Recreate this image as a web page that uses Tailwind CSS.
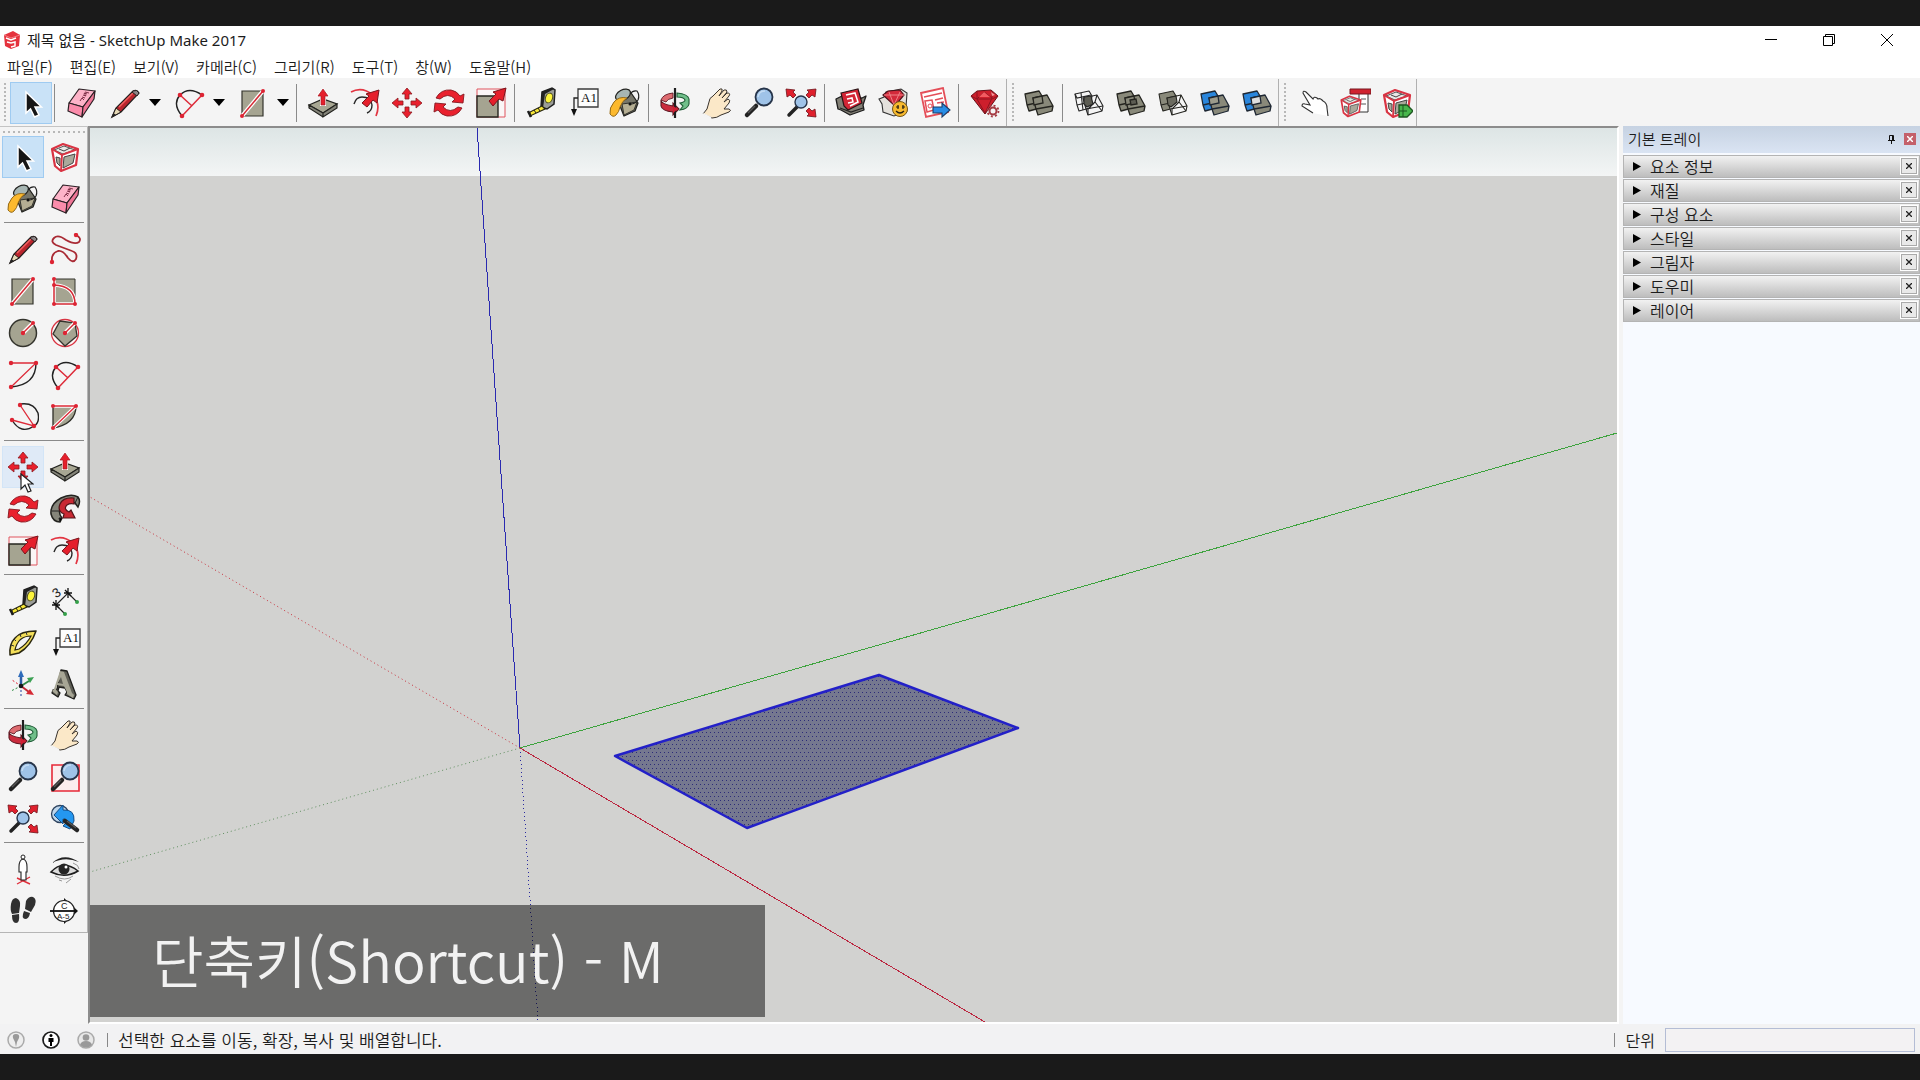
<!DOCTYPE html>
<html lang="ko">
<head>
<meta charset="utf-8">
<title>제목 없음 - SketchUp Make 2017</title>
<script src="https://cdn.jsdelivr.net/npm/@tailwindcss/browser@4"></script>
</head>
<body class="flex h-screen flex-col overflow-hidden bg-[#1a1a1a] py-[26px] font-['Noto_Sans_CJK_KR',sans-serif] font-[350] text-[#1c1c1c]">

<svg class="hidden" aria-hidden="true">
  <symbol id="select" viewBox="0 0 32 32"><path d="M11 5v21l4.500-4 4 8 4.500-2-4-8h6.500z" fill="#161616" stroke="#fff" stroke-width="1.500"/></symbol>
  <symbol id="eraser" viewBox="0 0 32 32"><g stroke="#2b2024" stroke-width="1.200" stroke-linejoin="round"><path d="M14 2l16 2-12 16-14-4z" fill="#fdb3c8"/><path d="M4 16l14 4-1 10-14-6z" fill="#fb8cab"/><path d="M30 4l-1 8-12 18 1-10z" fill="#f07797"/></g><path d="M15 14l2-3 2 2M17 10l3 1M18 8l3 1-2-3 3 1M20 5l4 1" fill="none" stroke="#7e3048" stroke-width="1"/></symbol>
  <symbol id="pencil" viewBox="0 0 32 32"><path d="M3 30l4-9L24 4q4-2 6 2L12 25z" fill="#b9252d" stroke="#26201f" stroke-width="1.300"/><path d="M3 30l4-9 5 4z" fill="#e6d9b6" stroke="#26201f"/><path d="M3 30l1.500-4 2.500 2z" fill="#222"/><path d="M10 20L24 6" stroke="#f3605f" stroke-width="1.500"/><path d="M23 5l5 4 2-3q-2-4-6-2z" fill="#8d8587" stroke="#26201f"/></symbol>
  <symbol id="arc2" viewBox="0 0 32 32"><path d="M9 29Q-1 17 7 8 16-1 29 8" fill="none" stroke="#222" stroke-width="1.400"/><path d="M9 29L29 8M7 8l12 11" fill="none" stroke="#dd2b39" stroke-width="1.500"/><g fill="#dd2433"><circle cx="7" cy="8" r="2.300"/><circle cx="29" cy="8" r="2.300"/><circle cx="9" cy="29" r="2.300"/></g></symbol>
  <symbol id="rect" viewBox="0 0 32 32"><path d="M5 4h21v25H5z" fill="#a5a491" stroke="#34342d" stroke-width="1.200"/><path d="M5 29L26 4" stroke="#fff" stroke-width="4"/><path d="M5 29L26 4" stroke="#d52a35" stroke-width="1.500"/><g fill="#dd2433"><circle cx="5" cy="29" r="2"/><circle cx="26" cy="4" r="2"/></g></symbol>
  <symbol id="pushpull" viewBox="0 0 32 32"><path d="M2 18l14-6 14 5-14 9z" fill="#a8a793" stroke="#22221e" stroke-width="1.200"/><path d="M2 18v3l14 9v-4zM30 17v4l-14 9v-4z" fill="#85857a" stroke="#22221e" stroke-width="1.200"/><path d="M16 1l7 8h-4v10h-6V9H9z" fill="#fff"/><path d="M16 2l5 7h-3v9h-4V9h-3z" fill="#e51f2b" stroke="#a51a23" stroke-width=".7"/></symbol>
  <symbol id="offset" viewBox="0 0 32 32"><path d="M2 5Q13-1 24 8q8 9 3 21" fill="none" stroke="#e23542" stroke-width="1.700"/><path d="M5 17q2-7 8-7 9 0 10 8 0 6-5 8" fill="none" stroke="#272727" stroke-width="1.400"/><path d="M13 16l7-7-3-2L30 3l-2 13-4-3-6 7z" fill="#e51f2b" stroke="#79151c" stroke-width="1"/></symbol>
  <symbol id="move" viewBox="0 0 32 32"><g fill="#e9202d" stroke="#8b1a20" stroke-width=".8"><path d="M16 1l5 6h-3v5h-4V7h-3z"/><path d="M31 16l-6 5v-3h-5v-4h5v-3z"/><path d="M16 31l-5-6h3v-5h4v5h3z"/><path d="M1 16l6-5v3h5v4H7v3z"/></g></symbol>
  <symbol id="rotate" viewBox="0 0 32 32"><g fill="#e9202d" stroke="#841920" stroke-width=".9"><path d="M3 11Q8 2 18 3q6 1 9 6l4-2-1 9-11-1 3-3q-7-7-15 0z"/><path d="M29 21q-5 9-15 8-6-1-9-6l-4 2 1-9 11 1-3 3q7 7 15 0z"/></g></symbol>
  <symbol id="scale" viewBox="0 0 32 32"><path d="M2 2h28v28H2z" fill="#faf6f6" stroke="#e0555e"/><path d="M2 9h21v21H2z" fill="#a5a491" stroke="#26261f" stroke-width="1.400"/><path d="M14 14l7-7-3-2L31 1l-3 13-4-2-6 7z" fill="#e51f2b" stroke="#79151c"/></symbol>
  <symbol id="tape" viewBox="0 0 32 32"><path d="M17 5l10-4 3 2-1 14-7 5-6-2z" fill="#9a9c97" stroke="#202020" stroke-width="1.500"/><path d="M17 5l10-4 2 1-9 5-2 14-2-1z" fill="#222"/><ellipse cx="24" cy="11" rx="3.500" ry="5" fill="#fdf43c" stroke="#4b4a1c" transform="rotate(20 24 11)"/><path d="M17 19L5 25v4l15-7z" fill="#f7e736" stroke="#26240d" stroke-width="1.100"/><path d="M3 24l3 6" stroke="#1c1c1c" stroke-width="2.500"/><path d="M9 23l2 3M13 21l2 3" stroke="#1c1c1c"/></symbol>
  <symbol id="label" viewBox="0 0 32 32"><path d="M11 2h20v18H11z" fill="#fdfdfd" stroke="#3b3b3b" stroke-width="1.300"/><path d="M11 11H7v13" fill="none" stroke="#222" stroke-width="1.300"/><path d="M4 22h6l-3 7z" fill="#111"/><text x="14" y="15" font-family="Liberation Serif" font-size="13" fill="#111">A1</text></symbol>
  <symbol id="bucket" viewBox="0 0 32 32"><path d="M7 9L20 3l9 13-3 8-11 5z" fill="#77766a" stroke="#22221f" stroke-width="1.300" stroke-linejoin="round"/><path d="M13 17l15-2-3 8-10 5z" fill="#b5ae93" stroke="#33332d"/><ellipse cx="14" cy="8" rx="8" ry="5" fill="#a7b6b3" stroke="#22221f" stroke-width="1.200" transform="rotate(-28 14 8)"/><path d="M21 7q3-4 7-3 3 4 1 9-3 4-7 4" fill="none" stroke="#222" stroke-width="1.200"/><path d="M18 11q-8-2-13 4-5 6-4 12 3 4 6 1 3-3 4-8 2-6 7-9z" fill="#fcb92e" stroke="#93691a"/><circle cx="21" cy="17" r="1.500" fill="#111"/></symbol>
  <symbol id="orbit" viewBox="0 0 32 32"><path d="M18 6q11 1 12 6v5q-1 5-9 6l3-4-3-3q5-1 5-3-1-3-8-3z" fill="#70bf8a" stroke="#1f5c36" stroke-width="1.100"/><path d="M2 13q0 4 12 6v-3l6 6-6 6v-3Q3 24 2 19z" fill="#ca2b3d" stroke="#5c1620" stroke-width="1.100"/><path d="M2 13q2-6 12-7v5q-6 1-7 4z" fill="#dd6b70" stroke="#5c1620" stroke-width=".9"/><path d="M16 1v30" stroke="#1e1e1e" stroke-width="2.200"/><path d="M14 19l5 3-5 4z" fill="#d01f33"/></symbol>
  <symbol id="hand" viewBox="0 0 32 32"><path d="M2 27q5-4 6-12 0-4 4-6l7-7q3-1 2 2l-3 5 5-6q3-1 3 2l-5 6 5-5q4 0 2 3l-5 6 4-3q3 1 1 4l-5 6 5 0q3 1 0 3l-8 3q-4 3-9 3z" fill="#fbe8c8" stroke="#39332d" stroke-width="1"/><path d="M2 27l8 4" stroke="#f4f4f4" stroke-width="2"/></symbol>
  <symbol id="zoom" viewBox="0 0 32 32"><path d="M4 28l9-9" stroke="#222" stroke-width="4.500" stroke-linecap="round"/><path d="M5 26l7-7" stroke="#555" stroke-width="1.500"/><circle cx="21" cy="10" r="8.500" fill="#9fc3e8" stroke="#27354a" stroke-width="1.800"/><path d="M15 10q1-6 7-6" stroke="#c4dcf3" stroke-width="1.500" fill="none"/></symbol>
  <symbol id="zoomwin" viewBox="0 0 32 32"><path d="M3 4h27v26H3z" fill="#fbeeee" stroke="#e62937" stroke-width="1.600"/><use href="#zoom"/></symbol>
  <symbol id="extents" viewBox="0 0 32 32"><path d="M4 28l8-8" stroke="#222" stroke-width="3.500" stroke-linecap="round"/><circle cx="16" cy="15" r="6" fill="#9fc3e8" stroke="#27354a" stroke-width="1.400"/><g fill="#df202d" stroke="#6f141b" stroke-width=".8"><path d="M1 2l9 1-2 2 3 3-3 3-3-3-3 2z"/><path d="M31 2l-9 1 2 2-3 3 3 3 3-3 3 2z"/><path d="M31 30l-9-1 2-2-3-3 3-3 3 3 3-2z"/></g></symbol>
  <symbol id="prev" viewBox="0 0 32 32"><circle cx="11" cy="11" r="8.500" fill="#bcd5eb" stroke="#2d425d" stroke-width="1.300"/><path d="M5 12l9-10v5q12-1 11 11l-4 8-7-3q7-6 0-7v5z" fill="#2497f0" stroke="#174e86"/><path d="M16 18l12 9" stroke="#252525" stroke-width="4.500" stroke-linecap="round"/><path d="M18 18l9 7" stroke="#5a5a5a" stroke-width="1.200"/></symbol>
  <symbol id="warehouse" viewBox="0 0 32 32"><path d="M1 12l6-3 3 5 17-3 4-2-3 9 1 5-14 5-9-5-3-1z" fill="#827f75" stroke="#1d1d1d" stroke-width="1.300" stroke-linejoin="round"/><path d="M6 6l17-4 4 14-14 7-4-4z" fill="#d42535" stroke="#2b1416" stroke-width="1.200"/><path d="M11 8l9-2 2 6 1 3-8 4M12 12l5-1 1 4-5 1" fill="none" stroke="#fff" stroke-width="1.500"/><path d="M5 21l11 4 12-4" fill="none" stroke="#222" stroke-width="1.300"/></symbol>
  <symbol id="extwh" viewBox="0 0 32 32"><path d="M2 12l5-2 2-5 15-3 6 4-1 14 1 4-13 5-11-4-1-8z" fill="#e4e1dc" stroke="#333" stroke-width="1.100"/><path d="M6 8l5-4 12-1 4 5-9 11z" fill="#d32a3b" stroke="#4f131b" stroke-width="1.200"/><path d="M7 8l20 0M12 5l5 13 6-13" stroke="#ef8187" stroke-width="1" fill="none"/><circle cx="23" cy="22" r="7.500" fill="#f8ba2e" stroke="#725517"/><path d="M19 20h3M25 20h3M19 24q4 4 8 0M21 18v4M26 18v4" fill="none" stroke="#282012" stroke-width="1.200"/></symbol>
  <symbol id="layout" viewBox="0 0 32 32"><path d="M2 6l22-5 5 24-22 5z" fill="#fff" stroke="#e44e58" stroke-width="1.800"/><path d="M5 10l18-4M16 13l8-2M18 16l7-1" fill="none" stroke="#e44e58" stroke-width="1.600"/><path d="M6 14l7-1 2 10-7 2z" fill="none" stroke="#e44e58" stroke-width="1.500"/><circle cx="11" cy="19" r="2" fill="none" stroke="#e44e58"/><path d="M14 20h9v-4l8 7-8 7v-4h-9z" fill="#298de5" stroke="#1c3c65" stroke-width="1.100"/></symbol>
  <symbol id="ruby" viewBox="0 0 32 32"><path d="M2 9l6-5 14-1 7 6-13 18z" fill="#cd1f2c" stroke="#651018" stroke-width="1"/><path d="M8 4l0 8 7-7 8 6 0-7M2 9l6 3h15l6-3M8 12l8 14 7-15" fill="none" stroke="#8f1520"/><path d="M10 10l5-5 6 5z" fill="#f25b61"/><path d="M22 5l4 3-3 1z" fill="#f6989b"/><circle cx="24" cy="24" r="3.500" fill="#f4f4f4" stroke="#a53b43" stroke-width="2"/><circle cx="24" cy="24" r="5.500" fill="none" stroke="#a53b43" stroke-width="1.800" stroke-dasharray="2 2.300"/></symbol>
  <symbol id="solidA" viewBox="0 0 32 32"><path d="M2 7l14-3 3 5-2 12-11 3-2-6z" stroke-linejoin="round"/><path d="M4 18l9-2" fill="none"/></symbol>
  <symbol id="solidB" viewBox="0 0 32 32"><path d="M10 11l14-3 6 11-1 5-14 4-2-6z" stroke-linejoin="round"/><path d="M13 22l17-3" fill="none"/></symbol>
  <symbol id="shell" viewBox="0 0 32 32"><g fill="#89897a" stroke="#24241f" stroke-width="1.300"><use href="#solidA"/><use href="#solidB"/><path d="M10 11l9-2 1 7-9 2z"/></g></symbol>
  <symbol id="intersect" viewBox="0 0 32 32"><g fill="none" stroke="#252525" stroke-width="1.100"><use href="#solidA"/><use href="#solidB"/><path d="M2 7l2 4 14-3M8 6l2 17M24 8l-2 7 7 9M15 28l0-6 7-7"/><path d="M11 10l7-1 2 8-6 3-3-3z" fill="#5c5c53"/></g></symbol>
  <symbol id="union" viewBox="0 0 32 32"><g fill="#89897a" stroke="#24241f" stroke-width="1.300"><use href="#solidA"/><use href="#solidB"/><path d="M10 11l9-2 1 7-9 2z"/><path d="M15 13l6-1 1 5-6 1z" fill="#5c5c53"/></g></symbol>
  <symbol id="subtract" viewBox="0 0 32 32"><g stroke="#24241f" stroke-width="1.100"><g fill="#89897a"><use href="#solidA"/></g><g fill="#f6f6f6"><use href="#solidB"/></g><path d="M24 8l-2 7 7 9M15 28l0-6 7-7" fill="none"/><path d="M10 11l9-2 1 6-6 5-3-2z" fill="#6b6b60"/></g></symbol>
  <symbol id="trim" viewBox="0 0 32 32"><g stroke="#1e2733" stroke-width="1.300"><g fill="#2a86dc"><use href="#solidA"/></g><g fill="#89897a"><use href="#solidB"/></g><path d="M10 11l9-2 1 7-9 2z" fill="#9c9b8b"/></g></symbol>
  <symbol id="split" viewBox="0 0 32 32"><g stroke="#1e2733" stroke-width="1.300"><g fill="#2a86dc"><use href="#solidA"/></g><g fill="#89897a"><use href="#solidB"/></g><path d="M10 11l9-2 1 7-9 2z" fill="#dedede"/></g></symbol>
  <symbol id="pointer" viewBox="0 0 32 32"><path d="M16 26L5 19q0-3 3-2l5 1L6 6q0-3 3-1l7 7q1-3 4-1l1 1q2-1 4 1l1 1q4 2 4 7l1 8" fill="#fff" stroke="#303030" stroke-width="1.100"/></symbol>
  <symbol id="component" viewBox="0 0 32 32"><path d="M3 8L14 3l15 5-2 16-15 6-6-5z" fill="#fff" stroke="#d93443" stroke-width="2.200" stroke-linejoin="round"/><path d="M5 9l10-4 11 4-12 4z" fill="#e9e9e6" stroke="#555"/><path d="M7 16l4 1v8l-3-3zM15 16l11-3-2 9-10 5z" fill="#aaa99b" stroke="#444"/><path d="M10 8l5 2 6-3" fill="none" stroke="#444"/><path d="M3 8l10 6 16-6M13 14l-1 16" fill="none" stroke="#d93443" stroke-width="1.900"/></symbol>
  <symbol id="dynopts" viewBox="0 0 32 32"><path d="M20 4h9v21h-9z" fill="#fff" stroke="#333"/><path d="M11 2h21v5H11z" fill="#d0232f" stroke="#761820"/><path d="M22 12h5M22 17h5" stroke="#555"/><svg x="0" y="7" width="24" height="24"><use href="#component"/></svg></symbol>
  <symbol id="dynattr" viewBox="0 0 32 32"><use href="#component"/><path d="M18 18h8l6 6-6 6h-8z" fill="#47b64b" stroke="#1d5521" stroke-width="1.300"/><path d="M18 24h8M22 18v12" stroke="#1d5521"/></symbol>
  <symbol id="freehand" viewBox="0 0 32 32"><path d="M3 29q-1-9 6-11 5-1 10 7 5 6 8 1 2-6-4-8L7 12Q1 9 5 5t12 2q9 5 13 2 3-4-3-7" fill="none" stroke="#a92a34" stroke-width="1.800"/><circle cx="3" cy="29" r="2.200" fill="#dd2433"/><circle cx="27" cy="2" r="2.200" fill="#dd2433"/></symbol>
  <symbol id="rotrect" viewBox="0 0 32 32"><path d="M5 4h21v25H5z" fill="#a5a491" stroke="#34342d"/><path d="M5 4v25h21Q26 11 5 10" fill="none" stroke="#fff" stroke-width="3.500"/><path d="M5 4v25h21Q26 11 5 10" fill="none" stroke="#d52a35" stroke-width="1.500"/><g fill="#dd2433"><circle cx="5" cy="4" r="2"/><circle cx="5" cy="10" r="2"/><circle cx="5" cy="29" r="2"/><circle cx="26" cy="29" r="2"/></g></symbol>
  <symbol id="circle" viewBox="0 0 32 32"><circle cx="16" cy="16" r="13.500" fill="#a5a491" stroke="#34342d" stroke-width="1.500"/><path d="M16 16L26 6" stroke="#fff" stroke-width="4"/><path d="M16 16L26 6" stroke="#d52a35" stroke-width="1.500"/><circle cx="16" cy="16" r="2.200" fill="#dd2433"/><circle cx="26" cy="6" r="2" fill="#dd2433"/></symbol>
  <symbol id="polygon" viewBox="0 0 32 32"><circle cx="16" cy="16" r="13.500" fill="#fdf5f5" stroke="#d93543" stroke-width="1.300"/><path d="M11 4l15 2 2 13-12 10L4 17z" fill="#a5a491" stroke="#34342d" stroke-width="1.300"/><path d="M16 16L26 6" stroke="#fff" stroke-width="4"/><path d="M16 16L26 6" stroke="#d52a35" stroke-width="1.500"/><circle cx="16" cy="16" r="2.200" fill="#dd2433"/><circle cx="26" cy="6" r="2" fill="#dd2433"/></symbol>
  <symbol id="arc1" viewBox="0 0 32 32"><path d="M29 4Q29 26 4 28" fill="none" stroke="#222" stroke-width="1.400"/><path d="M4 4h25L4 28" fill="none" stroke="#dd2b39" stroke-width="1.300"/><g fill="#dd2433"><circle cx="4" cy="4" r="2.200"/><circle cx="29" cy="4" r="2.200"/><circle cx="4" cy="28" r="2.200"/></g></symbol>
  <symbol id="arc3" viewBox="0 0 32 32"><path d="M13 3q14-2 18 9 2 10-4 13-13 9-22-6" fill="none" stroke="#222" stroke-width="1.400"/><path d="M13 4l14 21L5 19" fill="none" stroke="#dd2b39" stroke-width="1.300"/><g fill="#dd2433"><circle cx="13" cy="4" r="2.200"/><circle cx="5" cy="19" r="2.200"/><circle cx="27" cy="25" r="2.200"/></g></symbol>
  <symbol id="pie" viewBox="0 0 32 32"><path d="M4 5h23q0 18-23 22z" fill="#a5a491" stroke="#2e2e28" stroke-width="1.300"/><path d="M4 5h23L4 27" fill="none" stroke="#fff" stroke-width="3.500"/><path d="M4 5h23L4 27" fill="none" stroke="#dd2b39" stroke-width="1.400"/><g fill="#dd2433"><circle cx="4" cy="5" r="2"/><circle cx="27" cy="5" r="2"/><circle cx="4" cy="27" r="2"/></g></symbol>
  <symbol id="follow" viewBox="0 0 32 32"><path d="M29 4Q22 0 12 5 1 11 2 21q2 8 9 8l2-4q-5-6 0-12 5-6 13-3l3 4q3-6 0-10z" fill="#85857a" stroke="#23231f" stroke-width="1.500"/><path d="M25 5q-11-1-14 6-3 7 4 10l-1 4 12 0-4-8-2 2q-6-3-2-7 3-2 7-1z" fill="#c92933" stroke="#52161a" stroke-width="1.200"/><path d="M3 18l7 0M11 29l-1-4 3 0M26 10l3-6" stroke="#222"/></symbol>
  <symbol id="dim" viewBox="0 0 32 32"><path d="M7 20L19 8l9 9M7 20l9 9" fill="none" stroke="#222" stroke-width="1.200"/><path d="M3 20h8M7 15v10M4 17l6 6M15 8h8M19 3v10M16 5l6 6" stroke="#111" stroke-width="1.300"/><circle cx="28" cy="17" r="2" fill="#35a04a"/><circle cx="16" cy="29" r="2" fill="#35a04a"/><text x="4" y="12" transform="rotate(-35 8 8)" font-family="Liberation Sans" font-size="13" fill="#222">3</text></symbol>
  <symbol id="protractor" viewBox="0 0 32 32"><path d="M29 4Q14 4 8 11 2 17 3 28l9-2Q24 19 29 4z" fill="#f4df59" stroke="#29260f" stroke-width="1.500" stroke-linejoin="round"/><path d="M24 9Q11 9 8 23l4-1Q20 17 24 9z" fill="#f4f4f4" stroke="#29260f" stroke-width="1.200"/><path d="M4 18l3 1M7 12l2 2M13 7l1 3M19 5l1 3" stroke="#333"/></symbol>
  <symbol id="axes" viewBox="0 0 32 32"><path d="M14 17V7" stroke="#2d5fa5" stroke-width="2.500"/><path d="M14 1l3 7h-6z" fill="#2d6bbb"/><path d="M14 17l8-5" stroke="#328b48" stroke-width="2"/><path d="M27 8l-4 6-3-5z" fill="#3ba153"/><path d="M14 17l8 6" stroke="#c42936" stroke-width="2"/><path d="M27 26l-8-1 4-5z" fill="#d52934"/><path d="M14 17v12" stroke="#2442a0" stroke-dasharray="2 2"/><path d="M14 17l-9-6" stroke="#d23" stroke-dasharray="2 2"/><path d="M14 17l-10 5" stroke="#2a8c3f" stroke-dasharray="2 2"/><circle cx="14" cy="17" r="2.300" fill="#181818"/></symbol>
  <symbol id="text3d" viewBox="0 0 32 32"><path d="M12 1l6 1 9 24-2 4-9-4 2-3-2-4-6-1-1 4 2 2-2 4-6-4 1-3 4-1z" fill="#5e5e55" stroke="#1f1f1c" stroke-width="1.300" stroke-linejoin="round"/><path d="M11 2l4 1 8 21 2 2-1 3-6-4 0-2-3-6-7-1-1 5 2 2-1 3-5-4 2-2zM12 8l-3 6 5 1z" fill="#a7a695" fill-rule="evenodd"/></symbol>
  <symbol id="camera" viewBox="0 0 32 32"><path d="M10 31l13-7M10 25l13 6" stroke="#e02f3b" stroke-width="1.400"/><path d="M16 6q4 1 4 8v5h-1v8h-5v-8h-2v-5q0-7 4-8z" fill="#fff" stroke="#222" stroke-width="1.100"/><circle cx="16" cy="4" r="2" fill="#fff" stroke="#222"/></symbol>
  <symbol id="look" viewBox="0 0 32 32"><path d="M3 10Q15-1 30 9 16 3 3 10z" fill="#222"/><path d="M2 19Q14 6 29 18q-13 8-27 1z" fill="#dcdcdc" stroke="#1e1e1e" stroke-width="1.600"/><circle cx="15" cy="16" r="5.500" fill="#252525"/><circle cx="17" cy="14" r="1.500" fill="#fff"/><path d="M6 23q10 6 18 0M24 10q6 2 6 6M10 27l3 1M22 26l-5 4" fill="none" stroke="#999"/></symbol>
  <symbol id="walk" viewBox="0 0 32 32"><g fill="#303030"><path d="M4 9q1-6 5-6 5 2 4 8l-1 7-7 1q-2-4-1-10z"/><path d="M5 20l7-1q1 9-3 9-4 0-4-8z"/><path d="M19 6q3-5 7-4 4 2 2 8l-4 7-6-3z"/><path d="M17 16l6 2q-1 6-5 6-4-1-1-8z"/></g></symbol>
  <symbol id="section" viewBox="0 0 32 32"><path d="M15 3l14 13-14 13z" fill="#151515"/><circle cx="15" cy="16" r="10.500" fill="#fff" stroke="#222" stroke-width="1.200"/><path d="M1 16h27" stroke="#111" stroke-width="1.800"/><text x="12" y="14" font-family="Liberation Sans" font-size="9" fill="#222">C</text><text x="8" y="24" font-family="Liberation Sans" font-size="8" fill="#222">A-5</text></symbol>
  <symbol id="logo" viewBox="0 0 18 18"><path d="M1 4L10 0l7 4-1 11-8 3-6-3z" fill="#e5323d"/><path d="M1 4l7 3 9-3" fill="none" stroke="#f27c82"/><path d="M3 7l5 2 5-2M4 11l4 1 4-1v4l-4 1" stroke="#fff" fill="none" stroke-width="1.500"/></symbol>
</svg>

<div class="flex min-h-0 flex-1 flex-col bg-[#f4f4f4]">
  <header class="bg-white">
    <div class="flex h-7 items-center pl-[3px] pr-1">
      <svg class="mr-[6px] size-[18px]"><use href="#logo"/></svg>
      <h1 class="flex-1 font-['Noto_Sans','Noto_Sans_CJK_KR',sans-serif] text-[15px] font-normal leading-5">제목 없음 - SketchUp Make 2017</h1>
      <button aria-label="최소화" class="grid h-7 w-[58px] place-items-center"><svg class="size-3" viewBox="0 0 12 12"><path d="M0 5.500h12" stroke="#000"/></svg></button>
      <button aria-label="이전 크기로 복원" class="grid h-7 w-[58px] place-items-center"><svg class="size-3" viewBox="0 0 12 12" fill="none" stroke="#000"><path d="M.5 2.500h9v9h-9zM2.500 2.500v-2h9v9h-2"/></svg></button>
      <button aria-label="닫기" class="grid h-7 w-[58px] place-items-center"><svg class="size-3" viewBox="0 0 12 12"><path d="M0 0l12 12M12 0L0 12" stroke="#000"/></svg></button>
    </div>
    <nav class="flex h-6 items-center gap-[17px] pl-[7px] pt-px text-[15px] leading-5">
      <button>파일(F)</button><button>편집(E)</button><button>보기(V)</button><button>카메라(C)</button><button>그리기(R)</button><button>도구(T)</button><button>창(W)</button><button>도움말(H)</button>
    </nav>
  </header>

  <div class="flex h-12 items-center pt-px">
    <div class="flex h-full items-center border-r border-[#b0b0b0]">
      <i class="ml-1 mr-1 h-10 w-[2px] bg-[repeating-linear-gradient(to_bottom,#b8b8b8_0_2px,transparent_2px_4px)]"></i>
      <button aria-label="선택" class="grid size-[42px] place-items-center border border-[#9fcbf1] bg-[#c9e2f7]"><svg class="size-8"><use href="#select"/></svg></button>
      <i class="ml-[2px] mr-[5px] h-[38px] w-px bg-[#8a8a8a]"></i>
      <button aria-label="지우개" class="grid size-[42px] place-items-center"><svg class="size-8"><use href="#eraser"/></svg></button>
      <button aria-label="선" class="grid size-[42px] place-items-center pl-1"><svg class="size-8"><use href="#pencil"/></svg></button>
      <button aria-label="선 도구 목록" class="grid h-[42px] w-[22px] place-items-center"><svg class="h-[7px] w-[12px]" viewBox="0 0 12 7"><path d="M0 0h12L6 7z"/></svg></button>
      <button aria-label="호" class="grid size-[42px] place-items-center pl-1"><svg class="size-8"><use href="#arc2"/></svg></button>
      <button aria-label="호 도구 목록" class="grid h-[42px] w-[22px] place-items-center"><svg class="h-[7px] w-[12px]" viewBox="0 0 12 7"><path d="M0 0h12L6 7z"/></svg></button>
      <button aria-label="직사각형" class="grid size-[42px] place-items-center pl-1"><svg class="size-8"><use href="#rect"/></svg></button>
      <button aria-label="도형 목록" class="grid h-[42px] w-[22px] place-items-center"><svg class="h-[7px] w-[12px]" viewBox="0 0 12 7"><path d="M0 0h12L6 7z"/></svg></button>
      <i class="ml-[2px] mr-[5px] h-[38px] w-px bg-[#8a8a8a]"></i>
      <button aria-label="밀기/끌기" class="grid size-[42px] place-items-center"><svg class="size-8"><use href="#pushpull"/></svg></button>
      <button aria-label="오프셋" class="grid size-[42px] place-items-center"><svg class="size-8"><use href="#offset"/></svg></button>
      <button aria-label="이동" class="grid size-[42px] place-items-center"><svg class="size-8"><use href="#move"/></svg></button>
      <button aria-label="회전" class="grid size-[42px] place-items-center"><svg class="size-8"><use href="#rotate"/></svg></button>
      <button aria-label="배율" class="grid size-[42px] place-items-center"><svg class="size-8"><use href="#scale"/></svg></button>
      <i class="ml-[2px] mr-[5px] h-[38px] w-px bg-[#8a8a8a]"></i>
      <button aria-label="줄자" class="grid size-[42px] place-items-center"><svg class="size-8"><use href="#tape"/></svg></button>
      <button aria-label="텍스트" class="grid size-[42px] place-items-center"><svg class="size-8"><use href="#label"/></svg></button>
      <button aria-label="페인트통" class="grid size-[42px] place-items-center"><svg class="size-8"><use href="#bucket"/></svg></button>
      <i class="ml-[2px] mr-[5px] h-[38px] w-px bg-[#8a8a8a]"></i>
      <button aria-label="궤도" class="grid size-[42px] place-items-center"><svg class="size-8"><use href="#orbit"/></svg></button>
      <button aria-label="이동 보기" class="grid size-[42px] place-items-center"><svg class="size-8"><use href="#hand"/></svg></button>
      <button aria-label="확대/축소" class="grid size-[42px] place-items-center"><svg class="size-8"><use href="#zoom"/></svg></button>
      <button aria-label="전체 보기" class="grid size-[42px] place-items-center"><svg class="size-8"><use href="#extents"/></svg></button>
      <i class="ml-[2px] mr-[5px] h-[38px] w-px bg-[#8a8a8a]"></i>
      <button aria-label="3D 웨어하우스" class="grid size-[42px] place-items-center"><svg class="size-8"><use href="#warehouse"/></svg></button>
      <button aria-label="확장 프로그램 웨어하우스" class="grid size-[42px] place-items-center"><svg class="size-8"><use href="#extwh"/></svg></button>
      <button aria-label="LayOut으로 보내기" class="grid size-[42px] place-items-center"><svg class="size-8"><use href="#layout"/></svg></button>
      <i class="ml-[2px] mr-[5px] h-[38px] w-px bg-[#8a8a8a]"></i>
      <button aria-label="확장 프로그램 관리자" class="grid size-[42px] place-items-center"><svg class="size-8"><use href="#ruby"/></svg></button>
    </div>
    <div class="flex h-full items-center border-r border-[#b0b0b0]">
      <i class="ml-[5px] mr-1 h-10 w-[2px] bg-[repeating-linear-gradient(to_bottom,#b8b8b8_0_2px,transparent_2px_4px)]"></i>
      <button aria-label="외피" class="grid size-[42px] place-items-center"><svg class="size-8"><use href="#shell"/></svg></button>
      <i class="ml-[2px] mr-[5px] h-[38px] w-px bg-[#8a8a8a]"></i>
      <button aria-label="교차" class="grid size-[42px] place-items-center"><svg class="size-8"><use href="#intersect"/></svg></button>
      <button aria-label="결합" class="grid size-[42px] place-items-center"><svg class="size-8"><use href="#union"/></svg></button>
      <button aria-label="빼기" class="grid size-[42px] place-items-center"><svg class="size-8"><use href="#subtract"/></svg></button>
      <button aria-label="자르기" class="grid size-[42px] place-items-center"><svg class="size-8"><use href="#trim"/></svg></button>
      <button aria-label="분할" class="grid size-[42px] place-items-center"><svg class="size-8"><use href="#split"/></svg></button>
    </div>
    <div class="flex h-full items-center border-r border-[#b0b0b0]">
      <i class="ml-[5px] mr-1 h-10 w-[2px] bg-[repeating-linear-gradient(to_bottom,#b8b8b8_0_2px,transparent_2px_4px)]"></i>
      <button aria-label="구성 요소와 상호 작용" class="grid size-[42px] place-items-center pl-1"><svg class="size-8"><use href="#pointer"/></svg></button>
      <button aria-label="구성 요소 옵션" class="grid size-[42px] place-items-center pl-1"><svg class="size-8"><use href="#dynopts"/></svg></button>
      <button aria-label="구성 요소 특성" class="grid size-[42px] place-items-center pl-1"><svg class="size-8"><use href="#dynattr"/></svg></button>
    </div>
  </div>

  <div class="flex min-h-0 flex-1">
    <aside class="w-[88px] shrink-0 border-t border-[#c4c4c4]">
      <div class="border-b border-r border-[#b5b5b5] pl-[2px]">
        <div class="flex h-[9px] items-center pl-px"><i class="h-[2px] w-[82px] bg-[repeating-linear-gradient(to_right,#b8b8b8_0_2px,transparent_2px_5px)]"></i></div>
        <div class="grid w-[84px] grid-cols-2">
          <button aria-label="선택" class="grid h-[42px] place-items-center border border-[#9fcbf1] bg-[#c9e2f7]"><svg class="size-8"><use href="#select"/></svg></button>
          <button aria-label="구성 요소 만들기" class="grid h-[42px] place-items-center"><svg class="size-8"><use href="#component"/></svg></button>
          <button aria-label="페인트통" class="grid h-[42px] place-items-center"><svg class="size-8"><use href="#bucket"/></svg></button>
          <button aria-label="지우개" class="grid h-[42px] place-items-center"><svg class="size-8"><use href="#eraser"/></svg></button>
        </div>
        <i class="mb-[5px] ml-[2px] mt-[2px] block h-px w-20 bg-[#8a8a8a]"></i>
        <div class="grid w-[84px] grid-cols-2">
          <button aria-label="선" class="grid h-[42px] place-items-center"><svg class="size-8"><use href="#pencil"/></svg></button>
          <button aria-label="자유형" class="grid h-[42px] place-items-center"><svg class="size-8"><use href="#freehand"/></svg></button>
          <button aria-label="직사각형" class="grid h-[42px] place-items-center"><svg class="size-8"><use href="#rect"/></svg></button>
          <button aria-label="회전된 직사각형" class="grid h-[42px] place-items-center"><svg class="size-8"><use href="#rotrect"/></svg></button>
          <button aria-label="원" class="grid h-[42px] place-items-center"><svg class="size-8"><use href="#circle"/></svg></button>
          <button aria-label="다각형" class="grid h-[42px] place-items-center"><svg class="size-8"><use href="#polygon"/></svg></button>
          <button aria-label="호" class="grid h-[42px] place-items-center"><svg class="size-8"><use href="#arc1"/></svg></button>
          <button aria-label="2점 호" class="grid h-[42px] place-items-center"><svg class="size-8"><use href="#arc2"/></svg></button>
          <button aria-label="3점 호" class="grid h-[42px] place-items-center"><svg class="size-8"><use href="#arc3"/></svg></button>
          <button aria-label="파이" class="grid h-[42px] place-items-center"><svg class="size-8"><use href="#pie"/></svg></button>
        </div>
        <i class="mb-[5px] ml-[2px] mt-[2px] block h-px w-20 bg-[#8a8a8a]"></i>
        <div class="grid w-[84px] grid-cols-2">
          <button aria-label="이동" class="relative grid h-[42px] place-items-center border border-[#d3e5f7] bg-[#dfeaf7]"><svg class="size-8"><use href="#move"/></svg><svg class="absolute left-[17px] top-[26px] h-[21px] w-[14px]" viewBox="0 0 14 21"><path d="M1 1v15l4-4 3 7 3-1-3-7h5z" fill="#fff" stroke="#222" stroke-width="1.200"/></svg></button>
          <button aria-label="밀기/끌기" class="grid h-[42px] place-items-center"><svg class="size-8"><use href="#pushpull"/></svg></button>
          <button aria-label="회전" class="grid h-[42px] place-items-center"><svg class="size-8"><use href="#rotate"/></svg></button>
          <button aria-label="따라가기" class="grid h-[42px] place-items-center"><svg class="size-8"><use href="#follow"/></svg></button>
          <button aria-label="배율" class="grid h-[42px] place-items-center"><svg class="size-8"><use href="#scale"/></svg></button>
          <button aria-label="오프셋" class="grid h-[42px] place-items-center"><svg class="size-8"><use href="#offset"/></svg></button>
        </div>
        <i class="mb-[5px] ml-[2px] mt-[2px] block h-px w-20 bg-[#8a8a8a]"></i>
        <div class="grid w-[84px] grid-cols-2">
          <button aria-label="줄자" class="grid h-[42px] place-items-center"><svg class="size-8"><use href="#tape"/></svg></button>
          <button aria-label="치수" class="grid h-[42px] place-items-center"><svg class="size-8"><use href="#dim"/></svg></button>
          <button aria-label="각도기" class="grid h-[42px] place-items-center"><svg class="size-8"><use href="#protractor"/></svg></button>
          <button aria-label="텍스트" class="grid h-[42px] place-items-center"><svg class="size-8"><use href="#label"/></svg></button>
          <button aria-label="축" class="grid h-[42px] place-items-center"><svg class="size-8"><use href="#axes"/></svg></button>
          <button aria-label="3D 텍스트" class="grid h-[42px] place-items-center"><svg class="size-8"><use href="#text3d"/></svg></button>
        </div>
        <i class="mb-[5px] ml-[2px] mt-[2px] block h-px w-20 bg-[#8a8a8a]"></i>
        <div class="grid w-[84px] grid-cols-2">
          <button aria-label="궤도" class="grid h-[42px] place-items-center"><svg class="size-8"><use href="#orbit"/></svg></button>
          <button aria-label="이동 보기" class="grid h-[42px] place-items-center"><svg class="size-8"><use href="#hand"/></svg></button>
          <button aria-label="확대/축소" class="grid h-[42px] place-items-center"><svg class="size-8"><use href="#zoom"/></svg></button>
          <button aria-label="창 확대" class="grid h-[42px] place-items-center"><svg class="size-8"><use href="#zoomwin"/></svg></button>
          <button aria-label="전체 보기" class="grid h-[42px] place-items-center"><svg class="size-8"><use href="#extents"/></svg></button>
          <button aria-label="이전 보기" class="grid h-[42px] place-items-center"><svg class="size-8"><use href="#prev"/></svg></button>
        </div>
        <i class="mb-[5px] ml-[2px] mt-[2px] block h-px w-20 bg-[#8a8a8a]"></i>
        <div class="grid w-[84px] grid-cols-2">
          <button aria-label="카메라 배치" class="grid h-[42px] place-items-center"><svg class="size-8"><use href="#camera"/></svg></button>
          <button aria-label="둘러보기" class="grid h-[42px] place-items-center"><svg class="size-8"><use href="#look"/></svg></button>
          <button aria-label="걷기" class="grid h-[42px] place-items-center"><svg class="size-8"><use href="#walk"/></svg></button>
          <button aria-label="단면" class="grid h-[42px] place-items-center"><svg class="size-8"><use href="#section"/></svg></button>
        </div>
      </div>
    </aside>

    <main class="relative min-w-0 flex-1 overflow-hidden border-b-2 border-l-2 border-r-2 border-t-2 border-b-white border-l-[#8c8c8c] border-r-white border-t-[#8c8c8c] bg-[#d2d2d0]">
      <svg class="absolute inset-0 size-full" viewBox="90 128 1527 894" preserveAspectRatio="xMinYMin slice" fill="none" role="img" aria-label="모델 보기">
        <defs>
          <pattern id="dots" width="4" height="8" patternUnits="userSpaceOnUse"><rect width="4" height="8" fill="#75788f"/><rect width="1" height="1" fill="#2c2c78"/><rect x="2" y="4" width="1" height="1" fill="#2c2c78"/></pattern>
          <linearGradient id="sky" x1="0" y1="0" x2="0" y2="1"><stop offset="0" stop-color="#dde5e5"/><stop offset="1" stop-color="#f3f5f5"/></linearGradient>
        </defs>
        <rect x="90" y="128" width="1527" height="48" fill="url(#sky)"/>
        <g shape-rendering="crispEdges">
          <path d="M477 128l43 620" stroke="#2a2ab0"/>
          <path d="M520 748l18 274" stroke="#2a2aa0" stroke-dasharray="1 3"/>
          <path d="M520 748L1617 433" stroke="#3da33d"/>
          <path d="M520 748l465 274" stroke="#bb2740"/>
        </g>
        <path d="M520 748L90 872" stroke="#5f8f5f" stroke-dasharray="1 3"/>
        <path d="M520 748L90 497" stroke="#c8303c" stroke-dasharray="1 3"/>
        <path d="M615 756l264-81 139 53-271 100z" fill="url(#dots)" stroke="#2320c8" stroke-width="2.500" stroke-linejoin="round"/>
      </svg>
      <div class="absolute bottom-[5px] left-[-2px] flex h-[112px] w-[677px] items-center bg-black/49 pb-1 pl-[64px]">
        <p class="whitespace-nowrap text-[56px] leading-[64px] text-[#f2f2f2]">단축키(Shortcut) - M</p>
      </div>
    </main>

    <aside class="ml-1 w-[297px] shrink-0 bg-[#f7faff]">
      <div class="flex h-[27px] items-center bg-linear-to-b from-[#c6d2e2] to-[#dae4f3] pb-px pl-[5px] pr-1">
        <h2 class="flex-1 text-[15px] leading-5">기본 트레이</h2>
        <button aria-label="자동 숨기기" class="mr-[9px]"><svg class="h-[9px] w-[7px]" viewBox="0 0 7 9"><path d="M1.500 5V.5h4V5M0 5.500h7M3.500 5v4M4.500 1v4" fill="none" stroke="#111"/></svg></button>
        <button aria-label="트레이 닫기" class="grid size-3 place-items-center bg-[#c4606a]"><svg class="size-[6px]" viewBox="0 0 6 6"><path d="M0 0l6 6M6 0L0 6" stroke="#fff" stroke-width="1.500"/></svg></button>
      </div>
      <div class="flex flex-col gap-px pt-[2px] text-[16px] leading-5">
        <section class="flex h-[23px] items-center border border-[#b4b4b4] bg-linear-to-b from-[#f2f2f2] to-[#bdbdbd] pb-px pl-[9px] pr-[2px]"><button class="flex flex-1 items-center gap-[9px]"><svg class="h-[9px] w-2" viewBox="0 0 8 9"><path d="M0 0l8 4.500L0 9z"/></svg>요소 정보</button><button aria-label="요소 정보 닫기" class="grid size-4 place-items-center border border-[#aaa] bg-[#e9e9e9] outline outline-white"><svg class="size-[6px]" viewBox="0 0 6 6"><path d="M0 0l6 6M6 0L0 6" stroke="#222" stroke-width="1.300"/></svg></button></section>
        <section class="flex h-[23px] items-center border border-[#b4b4b4] bg-linear-to-b from-[#f2f2f2] to-[#bdbdbd] pb-px pl-[9px] pr-[2px]"><button class="flex flex-1 items-center gap-[9px]"><svg class="h-[9px] w-2" viewBox="0 0 8 9"><path d="M0 0l8 4.500L0 9z"/></svg>재질</button><button aria-label="재질 닫기" class="grid size-4 place-items-center border border-[#aaa] bg-[#e9e9e9] outline outline-white"><svg class="size-[6px]" viewBox="0 0 6 6"><path d="M0 0l6 6M6 0L0 6" stroke="#222" stroke-width="1.300"/></svg></button></section>
        <section class="flex h-[23px] items-center border border-[#b4b4b4] bg-linear-to-b from-[#f2f2f2] to-[#bdbdbd] pb-px pl-[9px] pr-[2px]"><button class="flex flex-1 items-center gap-[9px]"><svg class="h-[9px] w-2" viewBox="0 0 8 9"><path d="M0 0l8 4.500L0 9z"/></svg>구성 요소</button><button aria-label="구성 요소 닫기" class="grid size-4 place-items-center border border-[#aaa] bg-[#e9e9e9] outline outline-white"><svg class="size-[6px]" viewBox="0 0 6 6"><path d="M0 0l6 6M6 0L0 6" stroke="#222" stroke-width="1.300"/></svg></button></section>
        <section class="flex h-[23px] items-center border border-[#b4b4b4] bg-linear-to-b from-[#f2f2f2] to-[#bdbdbd] pb-px pl-[9px] pr-[2px]"><button class="flex flex-1 items-center gap-[9px]"><svg class="h-[9px] w-2" viewBox="0 0 8 9"><path d="M0 0l8 4.500L0 9z"/></svg>스타일</button><button aria-label="스타일 닫기" class="grid size-4 place-items-center border border-[#aaa] bg-[#e9e9e9] outline outline-white"><svg class="size-[6px]" viewBox="0 0 6 6"><path d="M0 0l6 6M6 0L0 6" stroke="#222" stroke-width="1.300"/></svg></button></section>
        <section class="flex h-[23px] items-center border border-[#b4b4b4] bg-linear-to-b from-[#f2f2f2] to-[#bdbdbd] pb-px pl-[9px] pr-[2px]"><button class="flex flex-1 items-center gap-[9px]"><svg class="h-[9px] w-2" viewBox="0 0 8 9"><path d="M0 0l8 4.500L0 9z"/></svg>그림자</button><button aria-label="그림자 닫기" class="grid size-4 place-items-center border border-[#aaa] bg-[#e9e9e9] outline outline-white"><svg class="size-[6px]" viewBox="0 0 6 6"><path d="M0 0l6 6M6 0L0 6" stroke="#222" stroke-width="1.300"/></svg></button></section>
        <section class="flex h-[23px] items-center border border-[#b4b4b4] bg-linear-to-b from-[#f2f2f2] to-[#bdbdbd] pb-px pl-[9px] pr-[2px]"><button class="flex flex-1 items-center gap-[9px]"><svg class="h-[9px] w-2" viewBox="0 0 8 9"><path d="M0 0l8 4.500L0 9z"/></svg>도우미</button><button aria-label="도우미 닫기" class="grid size-4 place-items-center border border-[#aaa] bg-[#e9e9e9] outline outline-white"><svg class="size-[6px]" viewBox="0 0 6 6"><path d="M0 0l6 6M6 0L0 6" stroke="#222" stroke-width="1.300"/></svg></button></section>
        <section class="flex h-[23px] items-center border border-[#b4b4b4] bg-linear-to-b from-[#f2f2f2] to-[#bdbdbd] pb-px pl-[9px] pr-[2px]"><button class="flex flex-1 items-center gap-[9px]"><svg class="h-[9px] w-2" viewBox="0 0 8 9"><path d="M0 0l8 4.500L0 9z"/></svg>레이어</button><button aria-label="레이어 닫기" class="grid size-4 place-items-center border border-[#aaa] bg-[#e9e9e9] outline outline-white"><svg class="size-[6px]" viewBox="0 0 6 6"><path d="M0 0l6 6M6 0L0 6" stroke="#222" stroke-width="1.300"/></svg></button></section>
      </div>
    </aside>
  </div>

  <footer class="flex h-[30px] shrink-0 items-center bg-[#f2f2f3] pl-[7px] pr-[5px] pt-px">
    <button aria-label="지리적 위치" class="mr-[17px]"><svg class="size-[18px]" viewBox="0 0 18 18"><circle cx="9" cy="9" r="8" fill="#eee" stroke="#aaa" stroke-width="1.500"/><path d="M9 3q4 0 3 4l-2 4-1 5-1-5-2-4q-1-4 3-4z" fill="#999"/></svg></button>
    <button aria-label="저작자 정보" class="mr-[17px]"><svg class="size-[18px]" viewBox="0 0 18 18"><circle cx="9" cy="9" r="8" fill="#fff" stroke="#1c1c1c" stroke-width="1.700"/><circle cx="9" cy="4.500" r="1.500"/><path d="M6.500 7h5v4H10v4H8v-4H6.500z"/></svg></button>
    <button aria-label="로그인" class="mr-[12px]"><svg class="size-[18px]" viewBox="0 0 18 18"><circle cx="9" cy="9" r="8" fill="#e8e8e8" stroke="#aaa" stroke-width="1.500"/><circle cx="9" cy="6.500" r="3.300" fill="#999"/><path d="M3 14q1-4 6-4t6 4q-6 5-12 0z" fill="#999"/></svg></button>
    <i class="mr-[10px] h-[14px] w-px bg-[#888]"></i>
    <p class="flex-1 text-[17px] leading-5">선택한 요소를 이동, 확장, 복사 및 배열합니다.</p>
    <i class="mr-[11px] h-[14px] w-px bg-[#888]"></i>
    <label for="units" class="mr-[10px] text-[16px] leading-5">단위</label>
    <input id="units" type="text" class="h-6 w-[250px] border border-[#b4bdd5] bg-[#f3f2f3]">
  </footer>
</div>
</body>
</html>
